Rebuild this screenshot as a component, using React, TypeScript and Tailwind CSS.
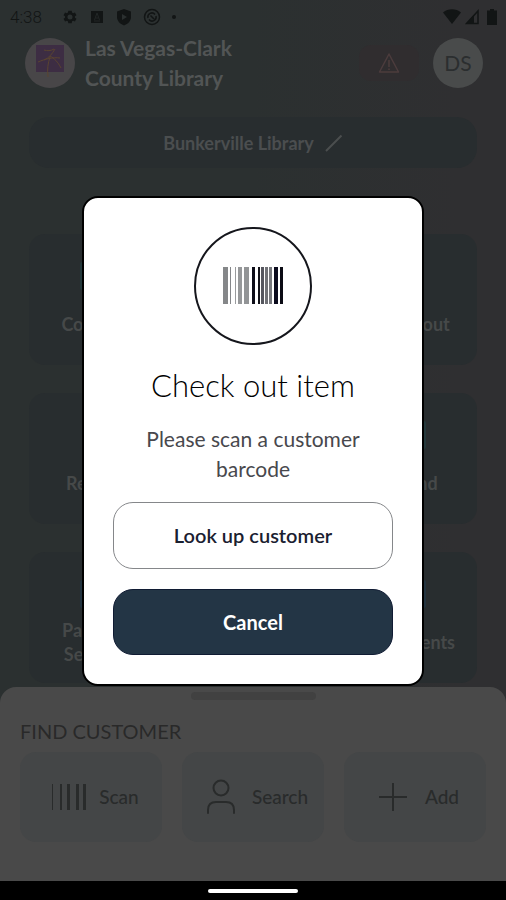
import type { ReactNode } from "react";

function StatusBar() {
  return (
    <div className="flex h-[33px] items-center justify-between pl-[10px] pr-[9px] text-[#121515]">
      <div className="flex items-center gap-4">
        <span className="w-9 font-['Roboto',sans-serif] text-[17px] font-light leading-5">4:38</span>
        <div className="flex items-center gap-[11px]">
          <svg width="16" height="16" viewBox="0 0 24 24" fill="currentColor" aria-hidden="true">
            <path
              fillRule="evenodd"
              d="M19.4 13a7.500 7.500 0 0 0 0-2l2.300-1.700-2.300-4-2.700 1.100a7.500 7.500 0 0 0-1.700-1L14.600 2.500H9.400L9 5.400a7.500 7.500 0 0 0-1.700 1L4.600 5.300l-2.300 4L4.600 11a7.500 7.500 0 0 0 0 2l-2.300 1.700 2.300 4 2.700-1.100a7.500 7.500 0 0 0 1.700 1l.4 2.900h5.200l.4-2.900a7.500 7.500 0 0 0 1.700-1l2.700 1.100 2.300-4ZM12 15.800a3.800 3.800 0 1 1 0-7.600 3.800 3.800 0 0 1 0 7.600Z"
            />
          </svg>
          <svg width="16" height="16" viewBox="0 0 16 16" fill="none" aria-hidden="true">
            <path d="M2 2h12v12H2z" fill="currentColor" />
            <path d="m5.500 11 2.500-7 2.500 7M6.500 9h3M5 12h6" stroke="#222727" />
          </svg>
          <svg width="16" height="18" viewBox="0 0 16 18" aria-hidden="true">
            <path d="M8 1 15 3.500V9c0 4-3 7-7 8.500C4 16 1 13 1 9V3.500Z" fill="currentColor" />
            <path d="m6 6 5 3-5 3Z" fill="#2b3030" />
          </svg>
          <svg width="18" height="18" viewBox="0 0 18 18" fill="none" stroke="currentColor" aria-hidden="true">
            <circle cx="9" cy="9" r="7.500" strokeWidth="1.500" />
            <path d="M5 10a4 4 0 0 1 7-3.500M13 8a4 4 0 0 1-7 3.500M7.500 7.500l3.500 3.500" strokeWidth="1.500" />
          </svg>
          <span className="size-1 rounded-full bg-current" />
        </div>
      </div>
      <div className="flex items-center gap-1">
        <svg width="18" height="16" viewBox="0 0 18 16" fill="currentColor" aria-hidden="true">
          <path d="M0 3.500C5-.8 13-.8 18 3.500L9 15Z" />
        </svg>
        <svg width="14" height="16" viewBox="0 0 14 16" aria-hidden="true">
          <path d="M13 2v12.500H1.500Z" fill="none" stroke="currentColor" strokeWidth="1.500" />
          <path d="M9 6v9H1Z" fill="currentColor" />
        </svg>
        <svg className="ml-1" width="10" height="16" viewBox="0 0 10 16" fill="currentColor" aria-hidden="true">
          <path d="M3 0h4v1.500h3V16H0V1.500h3Z" />
        </svg>
      </div>
    </div>
  );
}

function Header() {
  return (
    <header className="flex items-center pl-[25px] pr-[23px]">
      <div className="flex size-[50px] shrink-0 justify-center rounded-full bg-[#484648] pt-[7px]">
        <svg width="28" height="34" viewBox="0 0 28 34" fill="none" aria-hidden="true">
          <path d="M0 0h28v27H0z" fill="#3d2d43" />
          <path
            d="M8 5c3 1 7 1 10-1M2 17c7-3 15-5 22-4M19 4c-3 5-6 9-11 11M14 12c-2 6-3 12-2 20M14 11c4 2 8 6 11 12"
            stroke="#5a4430"
            strokeWidth="1"
          />
        </svg>
      </div>
      <h1 className="ml-[10px] flex-1 text-[21px] font-bold leading-[30px] text-[#525555]">
        Las Vegas-Clark
        <br />
        County Library
      </h1>
      <button
        type="button"
        aria-label="Alerts"
        className="mr-[14px] flex h-9 w-[60px] items-center justify-center rounded-xl bg-[#302d2f] text-[#4c3c3d]"
      >
        <svg width="22" height="22" viewBox="0 0 22 22" fill="none" stroke="currentColor" strokeWidth="1.500" aria-hidden="true">
          <path d="M11 2 20.500 20h-19ZM11 8v7M11 16.500v1.500" strokeLinejoin="round" />
        </svg>
      </button>
      <button type="button" className="size-[50px] rounded-full bg-[#494b4b] text-[21px] leading-6 text-[#2b2e2f]">
        DS
      </button>
    </header>
  );
}

function Tile({ label, tone }: { label: string; tone: string }) {
  return (
    <button
      type="button"
      className="flex h-[131px] w-[136px] flex-col items-center rounded-2xl bg-[#282d2f] px-4 pb-2 pt-7 text-[18px] font-bold leading-6 text-[#464949]"
    >
      <span className={`h-7 w-[34px] shrink-0 rounded-xs ${tone}`} />
      <span className="flex flex-1 items-center">{label}</span>
    </button>
  );
}

function CustomerAction({ label, gap, children }: { label: string; gap: string; children: ReactNode }) {
  return (
    <button
      type="button"
      className={`flex h-[90px] flex-1 items-center justify-center rounded-2xl bg-[#444647] pl-2 text-[19px] font-medium leading-6 text-[#292b2b] ${gap}`}
    >
      {children}
      {label}
    </button>
  );
}

const bars = [
  [0, 5, "#858789"],
  [7, 1, "#85878a"],
  [12, 1, "#999b9d"],
  [15, 4, "#96989a"],
  [21, 5, "#929496"],
  [29, 3, "#0d0d18"],
  [35, 2, "#111118"],
  [38, 3, "#55565e"],
  [42, 3, "#707176"],
  [46, 3, "#77787d"],
  [51, 4, "#0b0b1d"],
  [57, 3, "#0b0b14"],
] as const;

function CheckOutDialog() {
  return (
    <div className="absolute inset-0 flex items-center justify-center px-6">
      <div
        role="dialog"
        aria-modal="true"
        aria-labelledby="dialog-title"
        className="flex w-full max-w-[342px] flex-col items-center rounded-2xl border-2 border-black bg-white px-[29px] py-[29px] text-center"
      >
        <div className="flex size-[118px] items-center justify-center rounded-full border-2 border-[#15161c]">
          <svg width="60" height="37" viewBox="0 0 60 37" aria-hidden="true">
            {bars.map(([x, width, fill]) => (
              <rect key={x} x={x} width={width} height="37" fill={fill} />
            ))}
          </svg>
        </div>
        <h2 id="dialog-title" className="mt-5 text-[31px] font-light leading-10 text-black">
          Check out item
        </h2>
        <p className="mt-[19px] max-w-60 text-[21px] leading-[30px] text-[#48484d]">Please scan a customer barcode</p>
        <button
          type="button"
          className="mt-[18px] h-[67px] w-full rounded-[20px] border border-[#85878a] text-[20px] font-semibold leading-6 text-[#1a2030]"
        >
          Look up customer
        </button>
        <button
          type="button"
          className="mt-5 h-[66px] w-full rounded-[20px] border border-[#101b33] bg-[#233545] text-[20px] font-bold leading-6 text-white"
        >
          Cancel
        </button>
      </div>
    </div>
  );
}

export default function App() {
  return (
    <div className="flex h-screen flex-col bg-black font-['Lato','Noto_Sans',sans-serif]">
      <div className="relative flex flex-1 flex-col bg-linear-to-r from-[#2b3030] from-50% to-[#2f2f31] to-90%">
        <StatusBar />
        <Header />
        <main className="flex flex-1 flex-col px-[29px] pt-6">
          <button
            type="button"
            className="flex h-[51px] items-center justify-center gap-[11px] rounded-[20px] bg-[#282d2f] text-[18px] font-bold leading-6 text-[#4b4e4f]"
          >
            Bunkerville Library
            <svg width="18" height="18" viewBox="0 0 18 18" fill="none" aria-hidden="true">
              <path d="M1 17 16.500 1.500" stroke="currentColor" strokeWidth="2" />
            </svg>
          </button>
          <div className="mt-[66px] flex justify-between">
            <div className="flex flex-col gap-7">
              <Tile label="Contacts" tone="bg-[#25393c]" />
              <Tile label="Returns" tone="bg-[#282d2f]" />
              <Tile label="Passport Services" tone="bg-[#233440]" />
            </div>
            <div className="flex flex-col gap-7">
              <Tile label="Check out" tone="bg-[#282d2f]" />
              <Tile label="Refund" tone="bg-[#25393c]" />
              <Tile label="Documents" tone="bg-[#233440]" />
            </div>
          </div>
        </main>
        <section className="rounded-t-2xl bg-[#494949] px-5 pb-[39px] pt-[5px]">
          <div className="mx-auto h-2 w-[125px] rounded-full bg-[#414141]" />
          <h2 className="mt-[19px] text-[20px] leading-6 text-[#292929]">FIND CUSTOMER</h2>
          <div className="mt-[9px] flex gap-5">
            <CustomerAction label="Scan" gap="gap-3">
              <svg width="36" height="28" viewBox="0 0 36 28" fill="currentColor" aria-hidden="true">
                <path d="M1 1h1v26H1zM9 1h2v26H9zM16 1h3v26h-3zM25 1h3v26h-3zM32 1h3v26h-3z" />
              </svg>
            </CustomerAction>
            <CustomerAction label="Search" gap="gap-4">
              <svg width="30" height="36" viewBox="0 0 30 36" fill="none" stroke="currentColor" strokeWidth="2" strokeLinecap="round" aria-hidden="true">
                <circle cx="15" cy="9" r="7.500" />
                <path d="M2 34v-3c0-5 3-8 8-8h10c5 0 8 3 8 8v3" />
              </svg>
            </CustomerAction>
            <CustomerAction label="Add" gap="gap-[18px]">
              <svg width="28" height="28" viewBox="0 0 28 28" fill="none" stroke="currentColor" strokeWidth="2" aria-hidden="true">
                <path d="M14 0v28M0 14h28" />
              </svg>
            </CustomerAction>
          </div>
        </section>
        <CheckOutDialog />
      </div>
      <div className="flex h-[19px] shrink-0 items-center justify-center">
        <div className="mt-[1px] h-1 w-[90px] rounded-full bg-white" />
      </div>
    </div>
  );
}
